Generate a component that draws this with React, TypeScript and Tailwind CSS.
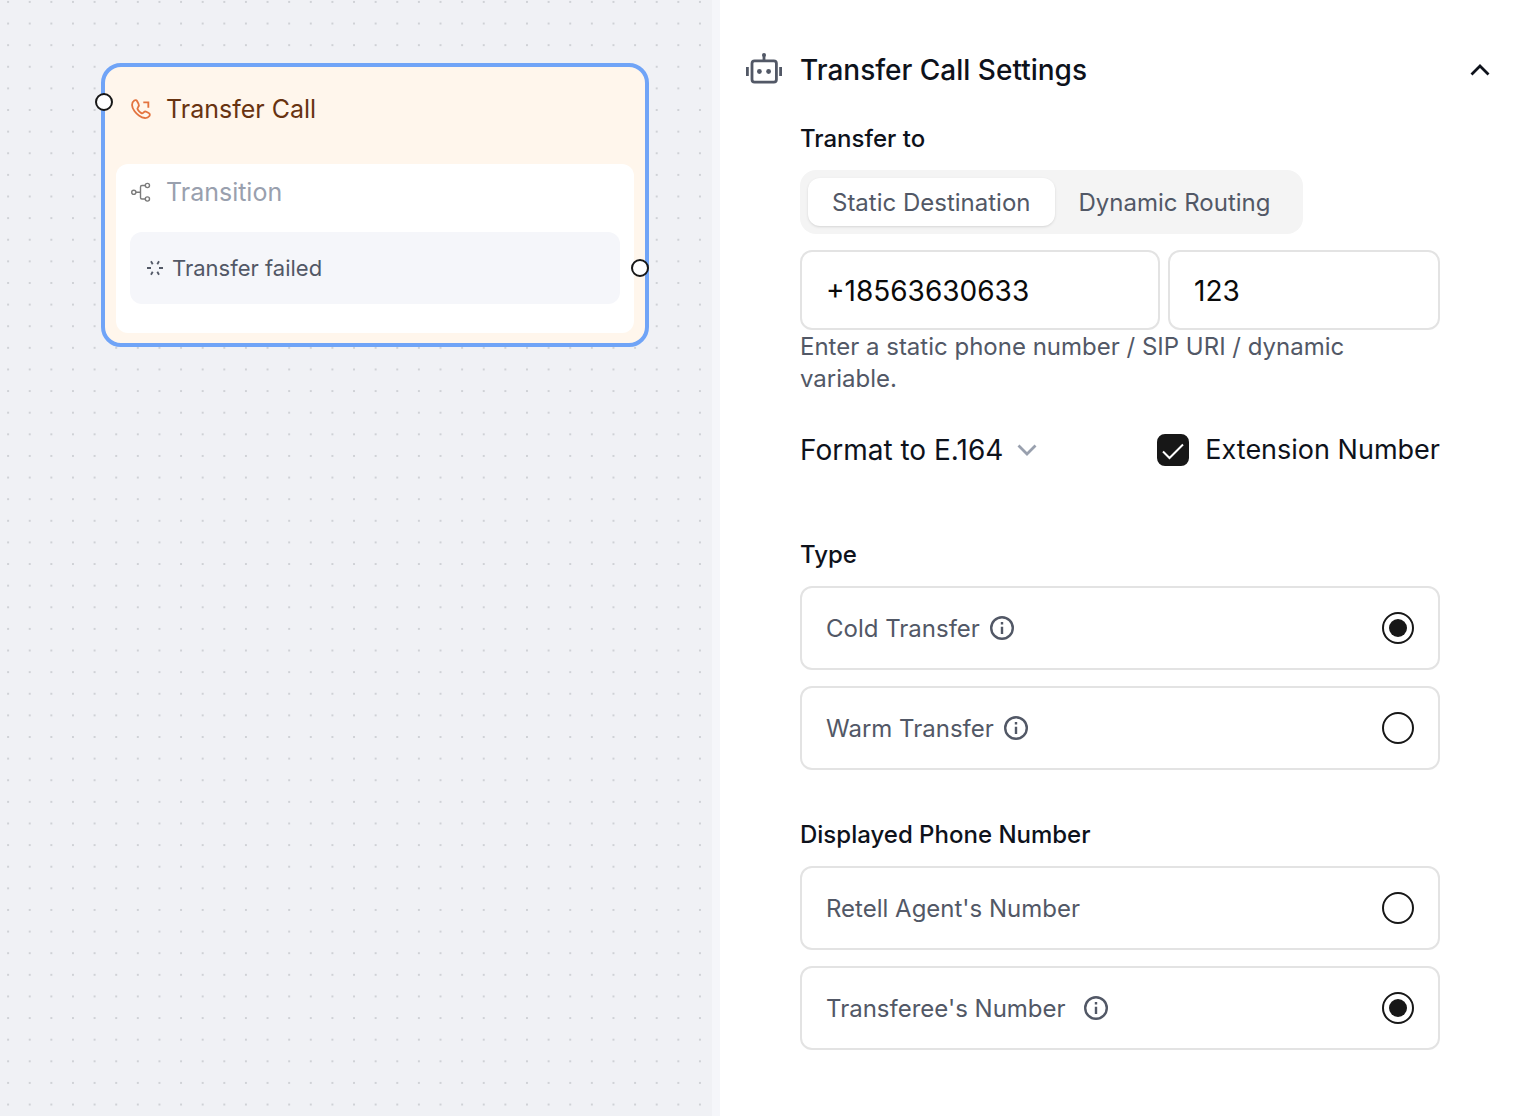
import React, { useId, useState } from 'react';

interface IconProps {
  className?: string;
}

const BotIcon = ({ className }: IconProps) => (
  <svg viewBox="0 0 36 36" fill="none" stroke="currentColor" strokeWidth="2.8" className={className} aria-hidden="true">
    <rect x="6" y="8.9" width="24.4" height="21.2" rx="2.6" />
    <path d="M18 8.5V3" />
    <path d="M1.4 15v9M34.6 15v9" />
    <circle cx="18" cy="3" r="2" fill="currentColor" stroke="none" />
    <circle cx="13.4" cy="19.5" r="2.4" fill="currentColor" stroke="none" />
    <circle cx="22.6" cy="19.5" r="2.4" fill="currentColor" stroke="none" />
  </svg>
);

const PhoneIcon = ({ className }: IconProps) => (
  <svg viewBox="0 0 24 24" fill="none" stroke="currentColor" strokeWidth="2" className={className} aria-hidden="true">
    <path
      strokeLinejoin="round"
      d="M9.2 6.2 7.8 3.5C7.2 2.300 5.800 2 4.700 2.700 1.300 5 1.400 9.800 5 14.500c1.300 1.800 2.900 3.300 4.700 4.600 4.600 3.500 9.200 3.700 11.500.5.8-1.100.4-2.600-.8-3.200l-2.600-1.400c-.9-.5-1.900-.3-2.600.4l-.9.9c-.5.5-1.300.6-1.900.2-1.600-1-3-2.400-4-4-.4-.6-.3-1.400.2-1.900l.4-.9c.8-.8.8-2.300.2-3.500Z"
    />
    <path d="M14.500 4.700h5.500v6" />
  </svg>
);

const TransitionIcon = ({ className }: IconProps) => (
  <svg viewBox="0 0 22 22" fill="none" stroke="currentColor" strokeWidth="1.4" className={className} aria-hidden="true">
    <circle cx="3.8" cy="11.3" r="2.1" />
    <circle cx="17.4" cy="4.5" r="2.1" />
    <circle cx="17.4" cy="18" r="2.1" />
    <path d="M6 11.3h4.500M15.200 4.500h-3.200a1.500 1.500 0 0 0-1.500 1.500v10.500a1.500 1.500 0 0 0 1.500 1.500h3.200" />
  </svg>
);

const BurstIcon = ({ className }: IconProps) => (
  <svg viewBox="0 0 18 18" fill="none" stroke="currentColor" strokeWidth="1.8" className={className} aria-hidden="true">
    <path d="M1 9h4M13 9h4M5 2.200l1.700 3M13 2.200l-1.700 3M5 15.800l1.700-3M13 15.800l-1.700-3" />
  </svg>
);

const InfoIcon = ({ className }: IconProps) => (
  <svg viewBox="0 0 24 24" fill="none" stroke="currentColor" strokeWidth="2.4" className={className} aria-hidden="true">
    <circle cx="12" cy="12" r="10.8" />
    <path d="M12 10.800V18M12 6v2.400" />
  </svg>
);

const ChevronIcon = ({ className }: IconProps) => (
  <svg viewBox="0 0 24 24" fill="none" stroke="currentColor" strokeWidth="2.8" className={className} aria-hidden="true">
    <path d="M3.500 7.500 12 16l8.500-8.500" />
  </svg>
);

const DotGrid = () => (
  <svg className="absolute inset-0 size-full" aria-hidden="true">
    <pattern id="dots" width="21.62" height="21.62" x="-2.7" y="-8.9" patternUnits="userSpaceOnUse">
      <circle cx="10.8" cy="10.8" r="1" fill="#c5c7cc" />
    </pattern>
    <rect width="100%" height="100%" fill="url(#dots)" />
  </svg>
);

const TransferNode = () => (
  <div className="relative w-[548px] rounded-[20px] border-4 border-[#70a4f7] bg-[#fff6ec] px-[11px] pb-[10px]">
    <span className="absolute top-[26px] -left-[10px] size-[18px] rounded-full border-2 border-[#171717] bg-white" />
    <div className="flex h-[97px] items-start gap-[14px] px-[14px] pt-[26px] text-[#683311]">
      <PhoneIcon className="mt-[5px] size-[22px] text-[#e3733f]" />
      <h2 className="text-[25px] leading-8">Transfer Call</h2>
    </div>
    <div className="rounded-xl bg-white px-[14px] pt-3 pb-[29px]">
      <div className="flex items-center gap-[14px] text-[#99a0ae]">
        <TransitionIcon className="size-[22px] text-[#7b7b7b]" />
        <h3 className="text-[25px] leading-8">Transition</h3>
      </div>
      <div className="mt-6 flex h-[72px] items-center gap-2 rounded-xl bg-[#f5f6fa] px-4 text-[#525866]">
        <BurstIcon className="size-[18px]" />
        <span className="text-[22px]">Transfer failed</span>
      </div>
    </div>
    <span className="absolute top-[192px] -right-[4px] size-[18px] rounded-full border-2 border-[#171717] bg-white" />
  </div>
);

interface RadioCardProps {
  name: string;
  label: string;
  checked: boolean;
  infoClass?: string;
  onSelect: () => void;
}

const RadioCard = ({ name, label, checked, infoClass, onSelect }: RadioCardProps) => {
  const id = useId();

  return (
    <div className="flex h-[84px] items-center rounded-xl border-2 border-[#e3e3e3] px-6 text-[#525866]">
      <label htmlFor={id} className="pt-0.5 text-2xl">{label}</label>
      {infoClass && <InfoIcon className={infoClass} />}
      <input
        id={id}
        type="radio"
        name={name}
        checked={checked}
        onChange={onSelect}
        className="ml-auto grid size-8 appearance-none place-content-center rounded-full border-2 border-[#171717]
                   checked:before:size-[18px] checked:before:rounded-full checked:before:bg-[#171717]"
      />
    </div>
  );
};

const destinations = ['Static Destination', 'Dynamic Routing'];

const SettingsPanel = () => {
  const [destination, setDestination] = useState(destinations[0]);
  const [type, setType] = useState('cold');
  const [display, setDisplay] = useState('transferee');
  const [hasExtension, setHasExtension] = useState(true);

  return (
    <section className="min-w-0 flex-1 bg-white px-[26px] py-[50px] text-[#0e121b]">
      <header className="flex h-10 items-center">
        <BotIcon className="size-9 text-[#525866]" />
        <h1 className="ml-[18px] text-[28px] font-medium">Transfer Call Settings</h1>
        <button type="button" aria-label="Collapse" className="ml-auto">
          <ChevronIcon className="size-6 rotate-180" />
        </button>
      </header>

      <div className="mt-8 mr-[52px] ml-[54px]">
        <h2 className="pt-px text-2xl font-medium">Transfer to</h2>
        <div className="mt-[15px] flex w-fit rounded-2xl bg-[#f4f4f4] p-2">
          {destinations.map(item => (
            <button
              key={item}
              type="button"
              aria-pressed={item === destination}
              onClick={() => setDestination(item)}
              className="h-12 rounded-xl px-6 pt-0.5 text-2xl text-[#525866] aria-pressed:bg-white aria-pressed:shadow-sm"
            >
              {item}
            </button>
          ))}
        </div>

        <div className="mt-4 grid grid-cols-[360fr_272fr] gap-2 text-[28px] text-[#0a0a0a]">
          <input
            type="tel"
            aria-label="Phone number"
            defaultValue="+18563630633"
            className="h-20 min-w-0 rounded-xl border-2 border-[#e3e3e3] px-6 pt-0.5"
          />
          <input
            type="text"
            aria-label="Extension"
            defaultValue="123"
            className="h-20 min-w-0 rounded-xl border-2 border-[#e3e3e3] px-6 pt-0.5"
          />
        </div>
        <p className="pt-px text-2xl text-[#525866]">
          Enter a static phone number / SIP URI / dynamic variable.
        </p>

        <div className="mt-[39px] flex h-8 items-center justify-between">
          <div className="grid items-center">
            <select
              aria-label="Number format"
              className="field-sizing-content col-start-1 row-start-1 appearance-none bg-transparent pr-9 text-[28px]"
            >
              <option>Format to E.164</option>
            </select>
            <ChevronIcon className="pointer-events-none col-start-1 row-start-1 size-6 justify-self-end text-[#99a0ae]" />
          </div>
          <label className="flex items-center gap-4 text-[27px]">
            <span className="grid place-items-center">
              <input
                type="checkbox"
                checked={hasExtension}
                onChange={e => setHasExtension(e.target.checked)}
                className="peer col-start-1 row-start-1 size-8 appearance-none rounded-lg border-2 border-[#171717] checked:bg-[#171717]"
              />
              <svg
                viewBox="0 0 32 32"
                fill="none"
                stroke="white"
                strokeWidth="2"
                className="pointer-events-none invisible col-start-1 row-start-1 size-8 peer-checked:visible"
                aria-hidden="true"
              >
                <path d="M6 17.500l6.500 6.500L26 10.500" />
              </svg>
            </span>
            Extension Number
          </label>
        </div>

        <h2 className="mt-[72px] pt-px text-2xl font-medium">Type</h2>
        <div className="mt-[15px] space-y-4">
          <RadioCard
            name="type"
            label="Cold Transfer"
            infoClass="ml-[10px] size-6"
            checked={type === 'cold'}
            onSelect={() => setType('cold')}
          />
          <RadioCard
            name="type"
            label="Warm Transfer"
            infoClass="ml-[10px] size-6"
            checked={type === 'warm'}
            onSelect={() => setType('warm')}
          />
        </div>

        <h2 className="mt-12 pt-px text-2xl font-medium">Displayed Phone Number</h2>
        <div className="mt-[15px] space-y-4">
          <RadioCard
            name="display"
            label="Retell Agent's Number"
            checked={display === 'agent'}
            onSelect={() => setDisplay('agent')}
          />
          <RadioCard
            name="display"
            label="Transferee's Number"
            infoClass="ml-[18px] size-6"
            checked={display === 'transferee'}
            onSelect={() => setDisplay('transferee')}
          />
        </div>
      </div>
    </section>
  );
};

const App = () => {
  return (
    <main className="flex min-h-screen font-['Inter',sans-serif]">
      <div className="relative w-[720px] shrink-0 border-r-8 border-[#f5f6fa] bg-[#f0f1f5]">
        <DotGrid />
        <div className="mt-[63px] ml-[101px]">
          <TransferNode />
        </div>
      </div>
      <SettingsPanel />
    </main>
  );
};

export default App;
